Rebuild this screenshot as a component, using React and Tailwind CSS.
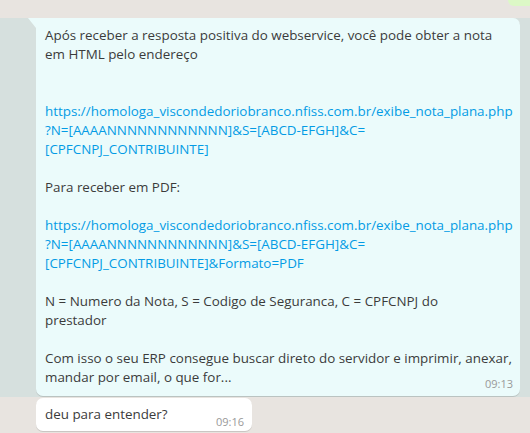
import React from "react";

const lines = [
  { t: "Após receber a resposta positiva do webservice, você pode obter a nota" },
  { t: "em HTML pelo endereço" },
  { t: "" },
  { t: "" },
  { t: "https://homologa_viscondedoriobranco.nfiss.com.br/exibe_nota_plana.php", link: true },
  { t: "?N=[AAAANNNNNNNNNNNN]&S=[ABCD-EFGH]&C=", link: true },
  { t: "[CPFCNPJ_CONTRIBUINTE]", link: true },
  { t: "" },
  { t: "Para receber em PDF:" },
  { t: "" },
  { t: "https://homologa_viscondedoriobranco.nfiss.com.br/exibe_nota_plana.php", link: true },
  { t: "?N=[AAAANNNNNNNNNNNN]&S=[ABCD-EFGH]&C=", link: true },
  { t: "[CPFCNPJ_CONTRIBUINTE]&Formato=PDF", link: true },
  { t: "" },
  { t: "N = Numero da Nota, S = Codigo de Seguranca, C = CPFCNPJ do" },
  { t: "prestador" },
  { t: "" },
  { t: "Com isso o seu ERP consegue buscar direto do servidor e imprimir, anexar," },
  { t: "mandar por email, o que for..." },
];

export default function App() {
  return (
    <div
      className="w-[530px] h-[433px] overflow-hidden bg-[#e8e4e0] flex flex-col text-[#3b3b3b]"
      style={{ fontFamily: '"Open Sans", "Noto Sans", sans-serif' }}
    >
      <div className="h-[18px] flex justify-end items-start">
        <div className="w-[22px] h-[6px] bg-[#dcf8c6] rounded-bl-[6px]" />
      </div>
      <div className="bg-[#d6e0de] pl-[36px] pr-[10px] pb-[1px]">
        <div className="relative bg-[#ebfbfb] rounded-[7px] rounded-tl-none shadow-[0_1px_0.5px_rgba(0,0,0,0.13)] pl-[9px] pr-[8px] pt-[8px] pb-[9px]">
          <svg className="absolute left-[-8px] top-0" width="8" height="13" viewBox="0 0 8 13">
            <path d="M0 0 H8 V10 Z" fill="#ebfbfb" />
          </svg>
          <div className="text-[13.4px] leading-[19px]">
            {lines.map((l, i) => (
              <div
                key={i}
                className={`h-[19px] whitespace-nowrap ${l.link ? "text-[#039be5]" : ""}`}
              >
                {l.t}
              </div>
            ))}
          </div>
          <div className="absolute right-[7px] bottom-[5px] text-[11px] leading-[15px] text-[#999999]">
            09:13
          </div>
        </div>
      </div>
      <div className="pl-[36px] pt-[1px]">
        <div className="w-[216px] h-[33px] bg-white rounded-[7px] shadow-[0_1px_0.5px_rgba(0,0,0,0.13)] flex items-start justify-between pl-[9px] pr-[8px] pt-[7px]">
          <span className="text-[13.4px] leading-[19px]">deu para entender?</span>
          <span className="text-[11px] leading-[15px] text-[#999999] mt-[9px]">09:16</span>
        </div>
      </div>
    </div>
  );
}
